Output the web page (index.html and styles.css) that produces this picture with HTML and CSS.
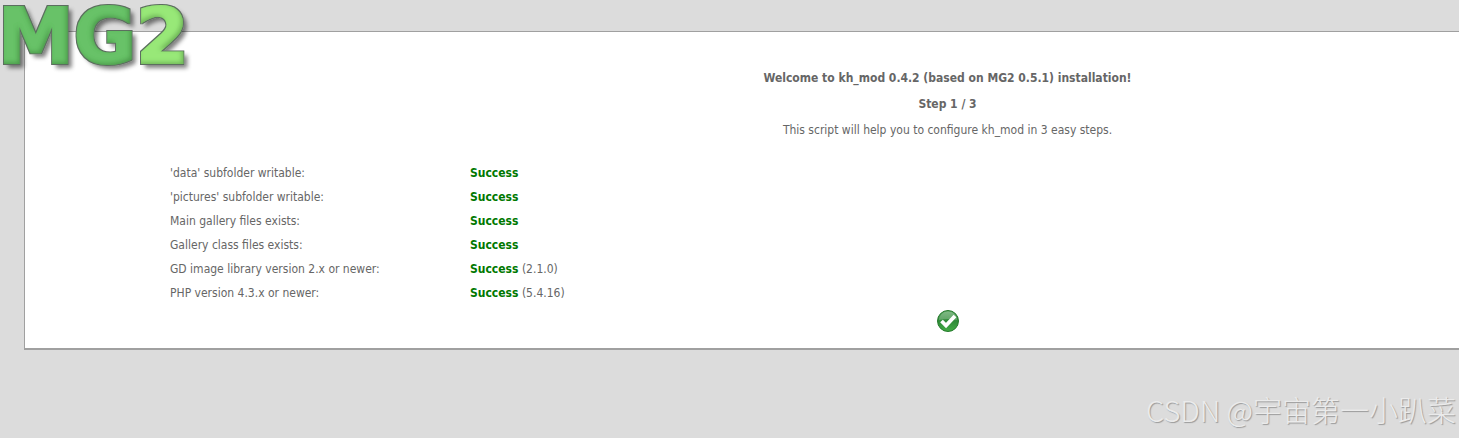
FILE: index.html
```html
<!DOCTYPE html>
<html lang="en">
<head>
  <meta charset="UTF-8">
  <title>kh_mod installation</title>
  <link rel="stylesheet" href="styles.css">
</head>
<body>

<svg class="logo" width="210" height="80" viewBox="0 0 210 80" role="img" aria-label="MG2">
  <defs>
    <filter id="bevel" x="-5%" y="-5%" width="115%" height="120%">
      <feMorphology in="SourceAlpha" operator="dilate" radius="0.6" result="fat"/>
      <feFlood flood-color="#5c6e5e"/>
      <feComposite in2="fat" operator="in" result="outline"/>
      <feGaussianBlur in="SourceAlpha" stdDeviation="2" result="soft"/>
      <feOffset in="soft" dx="-2" dy="-2" result="moved"/>
      <feComposite in="SourceAlpha" in2="moved" operator="out" result="edge"/>
      <feFlood flood-color="#1d6b1d" flood-opacity="0.5"/>
      <feComposite in2="edge" operator="in" result="shade"/>
      <feOffset in="soft" dx="4" dy="4" result="drop"/>
      <feFlood flood-color="#000" flood-opacity="0.5"/>
      <feComposite in2="drop" operator="in" result="shadow"/>
      <feMerge>
        <feMergeNode in="shadow"/>
        <feMergeNode in="outline"/>
        <feMergeNode in="SourceGraphic"/>
        <feMergeNode in="shade"/>
      </feMerge>
    </filter>
  </defs>
  <text class="logo-text" x="-2" y="63" filter="url(#bevel)">MG<tspan class="logo-two">2</tspan></text>
</svg>

<main class="panel">
  <div class="intro">
    <h1>Welcome to kh_mod 0.4.2 (based on MG2 0.5.1) installation!</h1>
    <h2>Step 1 / 3</h2>
    <p>This script will help you to configure kh_mod in 3 easy steps.</p>
  </div>

  <table class="checks">
    <tbody>
      <tr><td>'data' subfolder writable:</td><td><b>Success</b></td></tr>
      <tr><td>'pictures' subfolder writable:</td><td><b>Success</b></td></tr>
      <tr><td>Main gallery files exists:</td><td><b>Success</b></td></tr>
      <tr><td>Gallery class files exists:</td><td><b>Success</b></td></tr>
      <tr><td>GD image library version 2.x or newer:</td><td><b>Success</b> (2.1.0)</td></tr>
      <tr><td>PHP version 4.3.x or newer:</td><td><b>Success</b> (5.4.16)</td></tr>
    </tbody>
  </table>

  <form class="next">
    <button class="ok" type="button" aria-label="Continue">
      <svg width="24" height="24" viewBox="0 0 24 24">
        <defs>
          <linearGradient id="ball" x1="0" y1="0" x2="0" y2="1">
            <stop offset="0" stop-color="#5fa866"/>
            <stop offset="0.5" stop-color="#2f8a38"/>
            <stop offset="1" stop-color="#43ad45"/>
          </linearGradient>
        </defs>
        <circle cx="12" cy="12" r="10.5" fill="url(#ball)" stroke="#257a2c"/>
        <path d="M3 11a9 8.500 0 0 1 18 0Q12 9 3 11z" fill="#fff" opacity="0.22"/>
        <path d="M5.500 12l4.500 4.500 9-9.500" fill="none" stroke="#fff" stroke-width="3.800"/>
      </svg>
    </button>
  </form>
</main>

<div class="watermark">CSDN @宇宙第一小趴菜</div>

</body>
</html>
```
FILE: styles.css
```css
body {
  margin: 0;
  padding: 31px 0 0 24px;
  background: #dcdcdc;
  color: #666;
  font-family: Tahoma, "DejaVu Sans Condensed", sans-serif;
  font-size: 12px;
  line-height: 16px;
}

.logo {
  position: absolute;
  top: 0;
  left: 0;
}

.logo-text {
  font-family: "DejaVu Sans", sans-serif;
  font-size: 76px;
  font-weight: bold;
  fill: #68c267;
  stroke: #68c267;
  stroke-width: 2px;
}

.logo-two {
  fill: #98e878;
  stroke: #98e878;
}

.panel {
  padding: 38px 0 15px;
  background: #fff;
  border: 1px solid #a0a0a0;
  border-width: 1px 0 2px 1px;
}

/* the heading and the button are centred right of the check list */
.intro,
.next {
  padding-left: 411px;
  text-align: center;
}

.intro h1,
.intro h2,
.intro p {
  margin: 0 0 10px;
  font-size: 12px;
}

.intro p {
  margin-bottom: 23px;
}

.checks {
  margin-left: 145px;
  border-collapse: collapse;
}

.checks td {
  padding: 4px 0;
}

.checks td:first-child {
  width: 300px;
}

.checks b {
  color: #007800;
}

.next {
  margin: 4px 0 0;
}

.ok {
  display: block;
  margin: 0 auto;
  padding: 0;
  border: none;
  background: none;
  cursor: pointer;
}

.ok svg {
  display: block;
}

.watermark {
  position: absolute;
  right: 3px;
  bottom: 9px;
  color: #ebebeb;
  font-family: "Noto Sans CJK SC", sans-serif;
  font-size: 29px;
  font-weight: 300;
  line-height: 40px;
  text-shadow: 1px 1px 1px #999;
}
```
